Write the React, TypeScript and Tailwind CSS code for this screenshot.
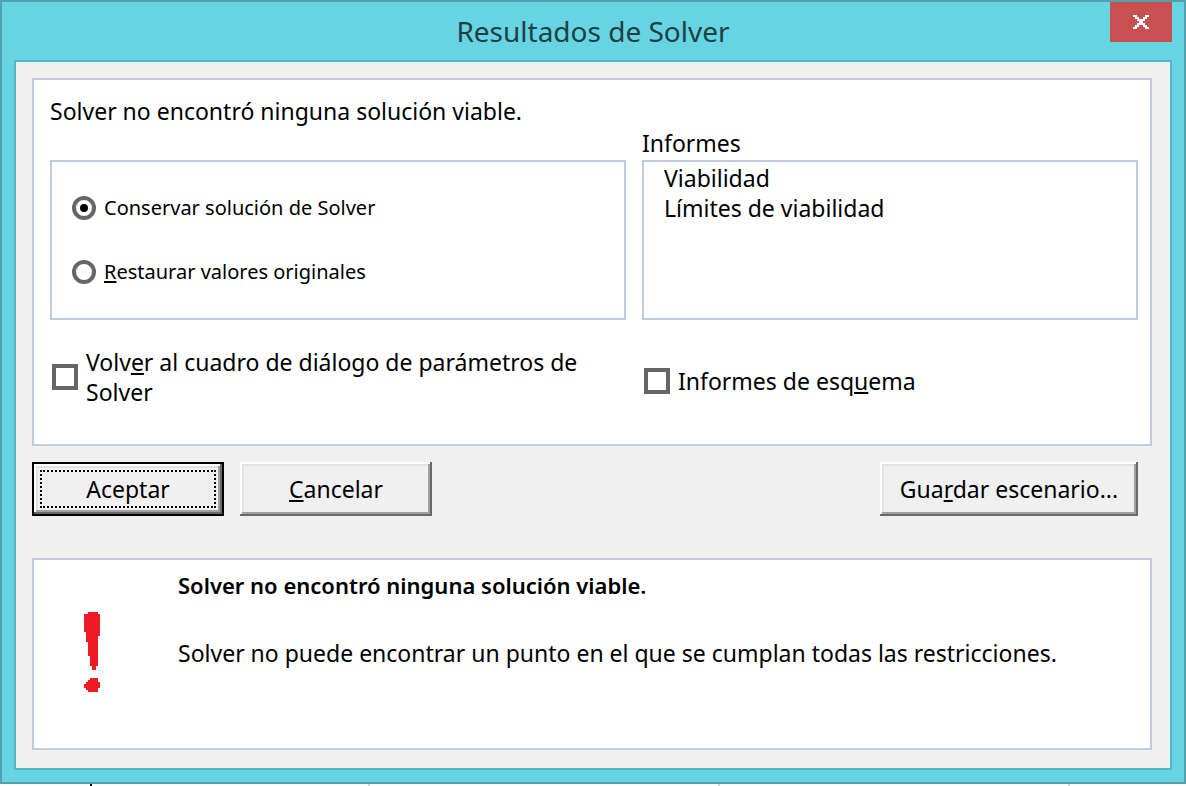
import type { ReactNode } from "react";

const buttonBase =
  "h-[54px] bg-[#f0f0f0] text-[23px] leading-[30px] text-black text-center whitespace-nowrap";
const raised =
  "shadow-[inset_-2px_-2px_#696969,inset_2px_2px_#ffffff,inset_-4px_-4px_#a0a0a0,inset_4px_4px_#e3e3e3]";
const raisedDefault =
  "shadow-[inset_0_0_0_2px_#000000,inset_-4px_-4px_#696969,inset_4px_4px_#ffffff,inset_-6px_-6px_#a0a0a0,inset_6px_6px_#e3e3e3]";

function Key({ children }: { children: ReactNode }) {
  return (
    <span className="underline decoration-2 underline-offset-2 [text-decoration-skip-ink:none]">
      {children}
    </span>
  );
}

function RadioRow({ id, checked, children }: { id: string; checked?: boolean; children: ReactNode }) {
  return (
    <div className="flex items-center gap-2">
      <input
        id={id}
        type="radio"
        name="resultado"
        defaultChecked={checked}
        className="grid size-6 shrink-0 appearance-none place-items-center rounded-full border-4 border-[#666666] bg-white before:size-2 before:rounded-full checked:before:bg-black"
      />
      <label htmlFor={id} className="text-[20px] leading-[30px]">
        {children}
      </label>
    </div>
  );
}

function CheckRow({ id, children }: { id: string; children: ReactNode }) {
  return (
    <div className="flex items-center gap-2 pl-0.5">
      <input
        id={id}
        type="checkbox"
        className="size-[26px] shrink-0 appearance-none border-4 border-[#666666] bg-white checked:bg-[#666666]"
      />
      <label htmlFor={id}>{children}</label>
    </div>
  );
}

function CloseIcon() {
  return (
    <svg viewBox="0 0 8 7" width="16" height="14" fill="#ffffff" shapeRendering="crispEdges" aria-hidden="true">
      <path d="M0 0h2v1h1v1h2v-1h1v-1h2v1h-1v1h-1v1h-1v1h1v1h1v1h1v1h-2v-1h-1v-1h-2v1h-1v1h-2v-1h1v-1h1v-1h1v-1h-1v-1h-1v-1h-1z" />
    </svg>
  );
}

function AlertIcon() {
  return (
    <svg viewBox="0 0 8 40" width="16" height="80" fill="#ed1c24" shapeRendering="crispEdges" aria-hidden="true">
      <path d="M2 0h5v1h1v11h-1v15h-1v2h-2v-2h-1v-5h-1v-7h-1v-5h-1v-9h2z" />
      <path d="M3 33h4v2h1v3h-1v2h-5v-1h-1v-1h-1v-2h1v-1h1v-1h1z" />
    </svg>
  );
}

export default function App() {
  return (
    <div className="bg-white font-['Noto_Sans',sans-serif] text-[23px] leading-[30px] text-black">
      <main className="border-2 border-[#51a0ac] bg-[#66d4e2] px-3 pb-3">
        <header className="grid h-[58px] grid-cols-[62px_1fr_62px] items-start">
          <h1 className="col-start-2 self-center text-center text-[28px] leading-[34px] text-[#1f3f44]">
            Resultados de Solver
          </h1>
          <button type="button" aria-label="Cerrar" className="flex h-10 items-center justify-center bg-[#c75050]">
            <CloseIcon />
          </button>
        </header>

        <div className="border-2 border-[#58b4c0] bg-[#f0f0f0] pt-4 pr-[18px] pb-[18px] pl-4">
          <section className="border-2 border-[#bfcddb] bg-white pt-4 pr-3 pb-[37px] pl-4">
            <p>Solver no encontró ninguna solución viable.</p>
            <div className="mt-0.5 grid grid-cols-[576fr_496fr] items-end gap-x-4">
              <fieldset className="flex h-40 flex-col justify-center gap-[34px] border-2 border-[#bfcddb] px-5">
                <RadioRow id="conservar" checked>
                  Conservar solución de Solver
                </RadioRow>
                <RadioRow id="restaurar">
                  <Key>R</Key>estaurar valores originales
                </RadioRow>
              </fieldset>
              <div>
                <label htmlFor="informes" className="block pb-0.5">
                  Informes
                </label>
                <select
                  id="informes"
                  multiple
                  size={4}
                  className="block h-40 w-full appearance-none overflow-hidden border-2 border-[#bfcddb] bg-white p-0"
                >
                  <option className="h-[30px] px-5 py-0">Viabilidad</option>
                  <option className="h-[30px] px-5 py-0">Límites de viabilidad</option>
                </select>
              </div>
            </div>
            <div className="mt-[27px] grid grid-cols-[576fr_496fr] items-center gap-x-4">
              <CheckRow id="volver">
                Volv<Key>e</Key>r al cuadro de diálogo de parámetros de <span>Solver</span>
              </CheckRow>
              <div className="pt-2">
                <CheckRow id="esquema">
                  Informes de esq<Key>u</Key>ema
                </CheckRow>
              </div>
            </div>
          </section>

          <div className="mt-4 flex gap-4 pr-3.5">
            <button type="button" className={`${buttonBase} ${raisedDefault} w-48 p-2`}>
              <span className="flex h-full items-center justify-center border-2 border-dotted border-black">
                Aceptar
              </span>
            </button>
            <button type="button" className={`${buttonBase} ${raised} w-48`}>
              <Key>C</Key>ancelar
            </button>
            <button type="button" className={`${buttonBase} ${raised} ml-auto w-[258px]`}>
              Gua<Key>r</Key>dar escenario...
            </button>
          </div>

          <section className="mt-[42px] flex h-48 border-2 border-[#bfcddb] bg-white pt-2.5">
            <div className="w-36 shrink-0 pt-[42px] pl-[50px]">
              <AlertIcon />
            </div>
            <div>
              <h2 className="text-[22px] font-semibold">Solver no encontró ninguna solución viable.</h2>
              <p className="mt-[38px]">Solver no puede encontrar un punto en el que se cumplan todas las restricciones.</p>
            </div>
          </section>
        </div>
      </main>
      <div className="grid h-0.5 grid-cols-[90px_278px_350px_350px_1fr]">
        <span />
        <span className="border-l-2 border-black" />
        <span className="border-l-2 border-[#d4d4d8]" />
        <span className="border-l-2 border-[#d4d4d8]" />
        <span className="border-l-2 border-[#d4d4d8]" />
      </div>
    </div>
  );
}
